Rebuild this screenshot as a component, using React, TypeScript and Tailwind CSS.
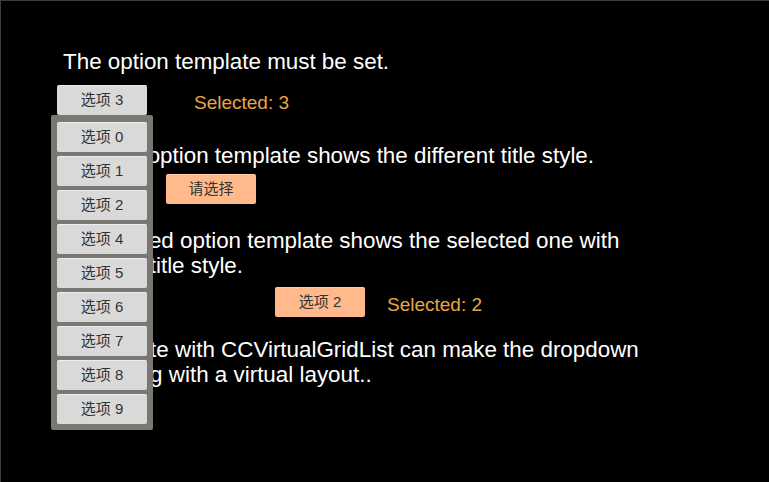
import React from "react";

const FONT = { fontFamily: '"Liberation Sans", Arial, "Noto Sans CJK SC", sans-serif' };

// --- small pieces ---
const OptionButton = ({ label, tone = "gray" }: { label: string; tone?: "gray" | "peach" }) => (
  <div
    className={`w-[90px] h-[30px] rounded-[2px] flex items-center justify-center text-[15px] text-[#333] border-t ${
      tone === "gray" ? "bg-[#d9d9d9] border-[#ececec]" : "bg-[#ffb98a] border-[#ffcaa4]"
    }`}
  >
    {label}
  </div>
);

const Selected = ({ value }: { value: number }) => (
  <span className="block translate-y-[3px] text-[19px] leading-[30px] text-[#e9a646]">Selected: {value}</span>
);

const Title = ({ children }: { children: React.ReactNode }) => (
  <p className="text-[22.4px] leading-[25px] text-white whitespace-nowrap">{children}</p>
);

const OPTIONS = [0, 1, 2, 4, 5, 6, 7, 8, 9];

export default function App() {
  return (
    <div
      style={FONT}
      className="w-[769px] h-[482px] bg-black border-t border-l border-[#3c3c3c] overflow-hidden"
    >
      <div className="flex flex-col pl-[62px] pt-[48px]">
        <Title>The option template must be set.</Title>

        {/* Row 1 with opened dropdown */}
        <div className="flex items-center mt-[11px] -ml-[6px]">
          <div className="relative">
            <OptionButton label="选项 3" />
            <div className="absolute left-[-6px] top-[30px] z-10 w-[102px] bg-[#797873] rounded-[2px] pt-[7px] pb-[6px] px-[6px] flex flex-col gap-[4px]">
              {OPTIONS.map(n => (
                <OptionButton key={n} label={`选项 ${n}`} />
              ))}
            </div>
          </div>
          <div className="ml-[47px]">
            <Selected value={3} />
          </div>
        </div>

        <div className="mt-[28px]">
          <Title>Tailored option template shows the different title style.</Title>
        </div>
        <div className="flex mt-[6px] ml-[103px]">
          <OptionButton label="请选择" tone="peach" />
        </div>

        <div className="mt-[24px]">
          <Title>
            A designed option template shows the selected one with
            <br />
            different title style.
          </Title>
        </div>
        <div className="flex items-center mt-[9px] ml-[212px]">
          <OptionButton label="选项 2" tone="peach" />
          <div className="ml-[22px]">
            <Selected value={2} />
          </div>
        </div>

        <div className="mt-[20px]">
          <Title>
            A template with CCVirtualGridList can make the dropdown
            <br />
            displaying with a virtual layout..
          </Title>
        </div>
      </div>
    </div>
  );
}
